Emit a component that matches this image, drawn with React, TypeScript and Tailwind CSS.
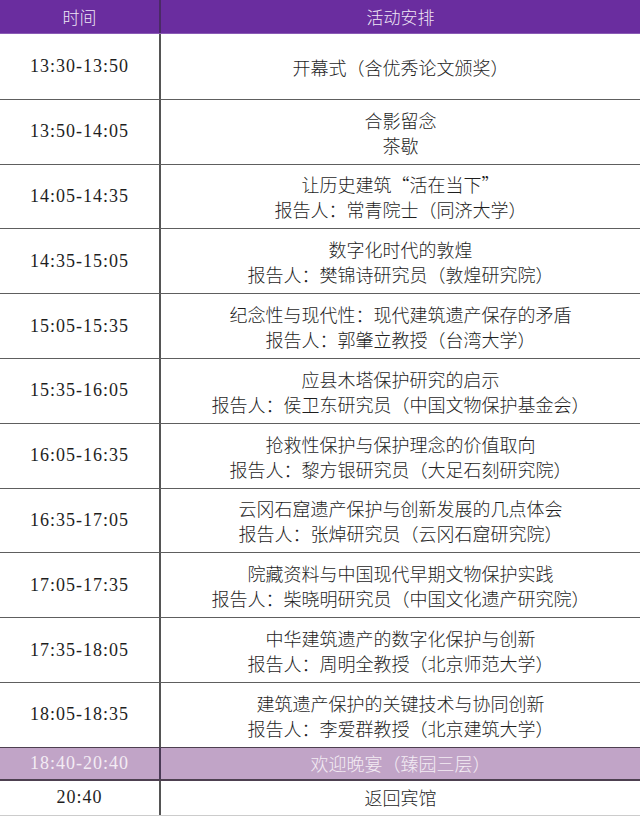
import React from 'react'

type Row = { time: string; lines: string[] }

const rows: Row[] = [
  { time: '13:30-13:50', lines: ['开幕式（含优秀论文颁奖）'] },
  { time: '13:50-14:05', lines: ['合影留念', '茶歇'] },
  { time: '14:05-14:35', lines: ['让历史建筑“活在当下”', '报告人：常青院士（同济大学）'] },
  { time: '14:35-15:05', lines: ['数字化时代的敦煌', '报告人：樊锦诗研究员（敦煌研究院）'] },
  { time: '15:05-15:35', lines: ['纪念性与现代性：现代建筑遗产保存的矛盾', '报告人：郭肇立教授（台湾大学）'] },
  { time: '15:35-16:05', lines: ['应县木塔保护研究的启示', '报告人：侯卫东研究员（中国文物保护基金会）'] },
  { time: '16:05-16:35', lines: ['抢救性保护与保护理念的价值取向', '报告人：黎方银研究员（大足石刻研究院）'] },
  { time: '16:35-17:05', lines: ['云冈石窟遗产保护与创新发展的几点体会', '报告人：张焯研究员（云冈石窟研究院）'] },
  { time: '17:05-17:35', lines: ['院藏资料与中国现代早期文物保护实践', '报告人：柴晓明研究员（中国文化遗产研究院）'] },
  { time: '17:35-18:05', lines: ['中华建筑遗产的数字化保护与创新', '报告人：周明全教授（北京师范大学）'] },
  { time: '18:05-18:35', lines: ['建筑遗产保护的关键技术与协同创新', '报告人：李爱群教授（北京建筑大学）'] },
]

const timeFont = "font-['Liberation_Serif','Noto_Sans_CJK_SC',serif] tracking-[1px]"
const cjkFont = "font-['Noto_Sans_CJK_SC',sans-serif] font-light"

export default function App() {
  return (
    <div className="w-[640px] h-[816px] bg-white overflow-hidden text-[#1e1e1e]">
      {/* header */}
      <div className="flex h-[34px] bg-[#6a2d9f] text-[#efe6f6] text-[17px] border-b border-[#8a5bb5]">
        <div className={`w-[161px] flex items-center justify-center border-r-2 border-[#4a2a66] ${cjkFont}`}>时间</div>
        <div className={`flex-1 flex items-center justify-center ${cjkFont}`}>活动安排</div>
      </div>

      {rows.map((r, i) => (
        <div key={r.time} className={`flex h-[64.8px] ${i > 0 ? 'border-t-[1.5px] border-[#5e5e5e]' : ''}`}>
          <div className={`w-[161px] flex items-center justify-center border-r-2 border-[#555] text-[18px] ${timeFont}`}>
            {r.time}
          </div>
          <div className={`flex-1 flex flex-col items-center justify-center text-[18px] leading-[25px] pt-[2px] ${cjkFont}`}>
            {r.lines.map((l) => (
              <div key={l}>{l}</div>
            ))}
          </div>
        </div>
      ))}

      {/* dinner */}
      <div className="flex h-[34px] bg-[#c1a4c7] text-[#f3ecf4] border-t-[1.5px] border-b-2 border-[#4d4050]">
        <div className={`w-[161px] flex items-center justify-center border-r-2 border-[#4a3a55] text-[18px] ${timeFont}`}>
          18:40-20:40
        </div>
        <div className={`flex-1 flex items-center justify-center text-[18px] ${cjkFont}`}>欢迎晚宴（臻园三层）</div>
      </div>

      <div className="flex h-[35px] border-b border-[#ccc]">
        <div className={`w-[161px] flex items-center justify-center border-r-2 border-[#555] text-[18px] ${timeFont}`}>
          20:40
        </div>
        <div className={`flex-1 flex items-center justify-center text-[18px] ${cjkFont}`}>返回宾馆</div>
      </div>
    </div>
  )
}
